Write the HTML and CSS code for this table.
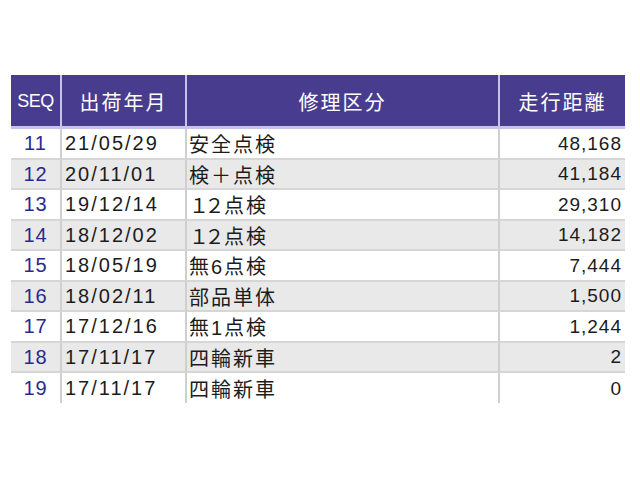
FILE: index.html
```html
<!DOCTYPE html>
<html lang="ja">
<head>
<meta charset="utf-8">
<link rel="stylesheet" href="styles.css">
</head>
<body>
<div class="sheet">
  <div class="grid">
    <div class="hd c-seq">SEQ</div>
    <div class="hd">出荷年月</div>
    <div class="hd">修理区分</div>
    <div class="hd last">走行距離</div>

    <div class="cell seq">11</div><div class="cell date">21/05/29</div><div class="cell kind">安全点検</div><div class="cell km">48,168</div>
    <div class="cell seq alt">12</div><div class="cell date alt">20/11/01</div><div class="cell kind alt">検＋点検</div><div class="cell km alt">41,184</div>
    <div class="cell seq">13</div><div class="cell date">19/12/14</div><div class="cell kind"><span class="fw">１２</span>点検</div><div class="cell km">29,310</div>
    <div class="cell seq alt">14</div><div class="cell date alt">18/12/02</div><div class="cell kind alt"><span class="fw">１２</span>点検</div><div class="cell km alt">14,182</div>
    <div class="cell seq">15</div><div class="cell date">18/05/19</div><div class="cell kind">無6点検</div><div class="cell km">7,444</div>
    <div class="cell seq alt">16</div><div class="cell date alt">18/02/11</div><div class="cell kind alt">部品単体</div><div class="cell km alt">1,500</div>
    <div class="cell seq">17</div><div class="cell date">17/12/16</div><div class="cell kind">無1点検</div><div class="cell km">1,244</div>
    <div class="cell seq alt">18</div><div class="cell date alt">17/11/17</div><div class="cell kind alt">四輪新車</div><div class="cell km alt">2</div>
    <div class="cell seq end">19</div><div class="cell date end">17/11/17</div><div class="cell kind end">四輪新車</div><div class="cell km end">0</div>
  </div>
</div>
</body>
</html>
```
FILE: styles.css
```css
html, body {
  margin: 0;
  padding: 0;
  background: #ffffff;
}
body {
  width: 640px;
  height: 480px;
  overflow: hidden;
  font-family: "Liberation Sans", "Noto Sans CJK JP", sans-serif;
}
.sheet {
  padding: 75px 0 0 11px;
}
.grid {
  width: 614px;
  display: grid;
  grid-template-columns: 51px 125px 313px 125px;
  grid-template-rows: 54px repeat(8, 30.5px) 30px;
  overflow: hidden;
}
.hd {
  background: #483c8e;
  color: #ffffff;
  font-size: 20px;
  letter-spacing: 2px;
  display: flex;
  align-items: center;
  justify-content: center;
  border-right: 2px solid #c9c2ea;
  border-bottom: 3px solid #c9c2ea;
  box-sizing: border-box;
  padding-top: 1px;
}
.hd.c-seq {
  font-size: 18px;
  letter-spacing: -0.5px;
}
.hd.last {
  border-right: none;
}
.cell {
  font-size: 20px;
  letter-spacing: 2px;
  color: #1c1c1c;
  background: #ffffff;
  display: flex;
  align-items: center;
  box-sizing: border-box;
  border-right: 2px solid #cfcfcf;
  border-bottom: 2px solid #d6d6d6;
  padding-top: 1px;
}
.cell.alt {
  background: #e9e9e9;
}
.cell.end {
  border-bottom: none;
}
.fw {
  letter-spacing: -4.5px;
  margin-right: 4px;
}
.seq {
  color: #2a2a8c;
  justify-content: center;
  letter-spacing: 1px;
}
.date {
  padding-left: 3px;
}
.kind {
  padding-left: 2px;
}
.km {
  justify-content: flex-end;
  padding-right: 3px;
  border-right: none;
  font-size: 19px;
  letter-spacing: 1px;
}
```
